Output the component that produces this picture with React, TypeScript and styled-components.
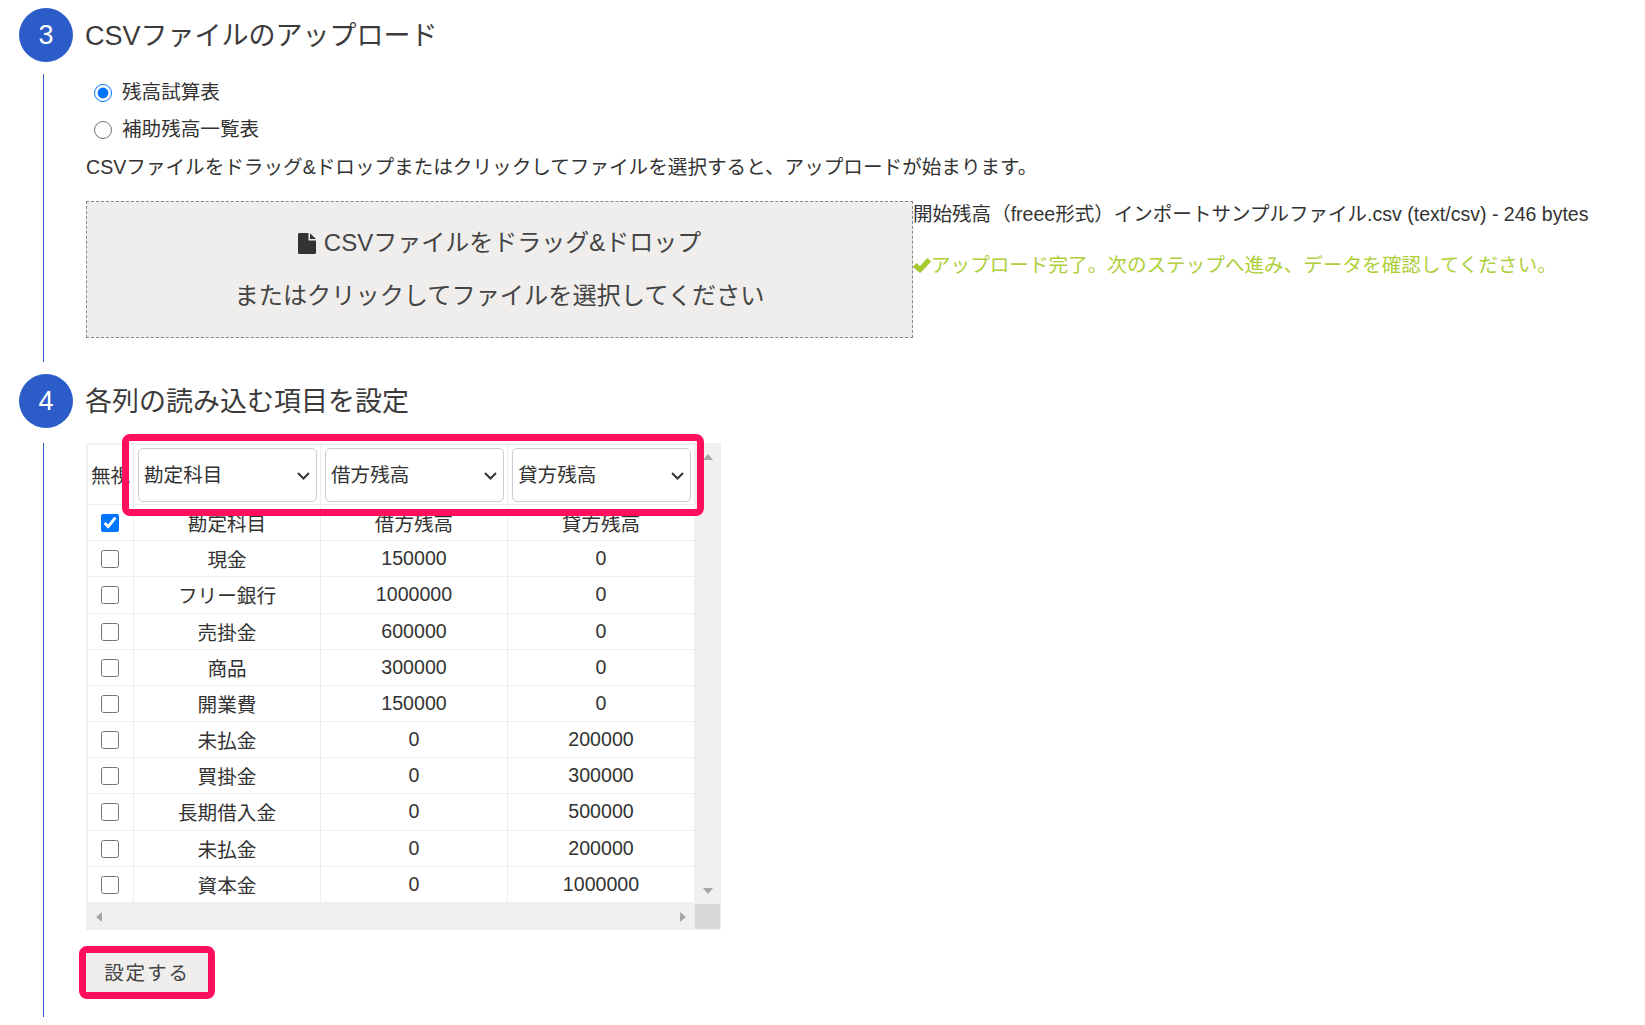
import React from 'react';
import styled, { createGlobalStyle } from 'styled-components';

const GlobalStyle = createGlobalStyle`
  html, body { margin: 0; padding: 0; background: #fff; }
  body {
    font-family: "Liberation Sans", "Noto Sans CJK JP", sans-serif;
    font-size: 19.6px;
    color: #333;
  }
`;

const Page = styled.div`
  padding-top: 8px;
  padding-left: 19px;
  width: 1626px;
`;

const StepHeader = styled.div<{ $gap: number }>`
  display: flex;
  align-items: center;
  gap: 12px;
  margin-bottom: ${(p) => p.$gap}px;
`;

const StepNumber = styled.div`
  flex: none;
  width: 54px;
  height: 54px;
  border-radius: 50%;
  background: #2b5cc8;
  color: #fff;
  font-size: 27px;
  line-height: 54px;
  text-align: center;
`;

const StepTitle = styled.h2`
  margin: 0;
  padding-top: 2px;
  font-size: 27px;
  font-weight: 400;
  line-height: 52px;
  color: #3b3b3b;
`;

const StepBody = styled.div<{ $bottom: number; $after?: number }>`
  margin-left: 24px;
  margin-bottom: ${(p) => p.$after ?? 0}px;
  padding-left: 42px;
  padding-bottom: ${(p) => p.$bottom}px;
  border-left: 1.5px solid #2b5cc8;
`;

const RadioRow = styled.label`
  display: flex;
  align-items: center;
  gap: 10px;
  height: 37px;
  padding-left: 8px;
  line-height: 37px;
`;

const Radio = styled.input`
  flex: none;
  width: 18px;
  height: 18px;
  margin: 0;
`;

const Note = styled.p`
  margin: 0 0 16px;
  padding-top: 1px;
  line-height: 36px;
  white-space: nowrap;
`;

const UploadRow = styled.div`
  display: flex;
  align-items: flex-start;
`;

const DropZone = styled.div`
  flex: none;
  box-sizing: border-box;
  width: 827px;
  height: 137px;
  display: flex;
  flex-direction: column;
  align-items: center;
  justify-content: center;
  gap: 17px;
  background: #efeeec;
  border: 1px dashed #888;
  line-height: 36px;
  color: #444;
`;

const DropLine = styled.div<{ $size: number }>`
  display: flex;
  align-items: center;
  gap: 8px;
  font-size: ${(p) => p.$size}px;
`;

const FileIcon = styled.svg`
  flex: none;
  width: 18px;
  height: 21px;
  fill: #333;
`;

const UploadInfo = styled.div`
  line-height: 24px;
  padding-top: 1px;
`;

const FileName = styled.div`
  font-size: 19.55px;
  white-space: nowrap;
`;

const DoneMessage = styled.div`
  display: flex;
  align-items: center;
  margin-top: 27px;
  color: #aecf3a;
  white-space: nowrap;
`;

const DoneIcon = styled.svg`
  flex: none;
  width: 18px;
  height: 15px;
  fill: #a6cb2f;
`;

const SheetFrame = styled.div`
  position: relative;
  width: 635px;
  height: 487px;
  display: grid;
  grid-template-columns: 608px 27px;
  grid-template-rows: 460px 27px;
  background: #f0f0f0;
`;

const Sheet = styled.div`
  padding: 2px 0 0 2px;
  overflow: hidden;
`;

const Row = styled.div<{ $head?: boolean }>`
  display: grid;
  grid-template-columns: 46px 187px 187px 186px;
  height: ${(p) => (p.$head ? '60px' : '36.18px')};
  background: #fff;
`;

const Cell = styled.div`
  box-sizing: border-box;
  display: flex;
  align-items: center;
  justify-content: center;
  overflow: hidden;
  border-right: 1.2px solid #eee;
  border-bottom: 1.2px solid #eee;
  white-space: nowrap;
  &:last-child { border-right: none; }
`;

const CheckCell = styled(Cell)`
  padding: 1px 2px 0 0;
`;

const HeadLabel = styled(Cell)`
  justify-content: flex-start;
  padding-left: 3px;
`;

const SelectCell = styled(Cell)`
  padding: 3px 0 0 3.5px;
  align-items: flex-start;
  justify-content: flex-start;
`;

const SelectBox = styled.div`
  position: relative;
  flex: none;
  width: 179.5px;
  height: 53.6px;
`;

const ColumnSelect = styled.select`
  appearance: none;
  box-sizing: border-box;
  width: 100%;
  height: 100%;
  padding: 0 24px 0 5.5px;
  border: 1.2px solid #ccc;
  border-radius: 5px;
  background: #fff;
  color: #333;
  font: inherit;
`;

const Chevron = styled.svg`
  position: absolute;
  right: 7px;
  top: 23.5px;
  width: 13px;
  height: 8px;
  fill: none;
  stroke: #333;
  stroke-width: 2;
  pointer-events: none;
`;

const Check = styled.input`
  width: 18px;
  height: 18px;
  margin: 0;
`;

const VerticalTrack = styled.div`
  display: flex;
  flex-direction: column;
  align-items: center;
  justify-content: space-between;
  padding: 11px 0 9px;
`;

const HorizontalTrack = styled.div`
  display: flex;
  align-items: center;
  justify-content: space-between;
  padding: 0 8px 0 10px;
`;

const Corner = styled.div`
  margin: 1px;
  background: #d8d8d8;
`;

const arrowBorders = {
  up: 'border-width: 0 5.5px 6px; border-color: transparent transparent #a6a6a6;',
  down: 'border-width: 6px 5.5px 0; border-color: #a6a6a6 transparent transparent;',
  left: 'border-width: 5.5px 6px 5.5px 0; border-color: transparent #a6a6a6 transparent transparent;',
  right: 'border-width: 5.5px 0 5.5px 6px; border-color: transparent transparent transparent #a6a6a6;',
};

const Arrow = styled.span<{ $dir: keyof typeof arrowBorders }>`
  width: 0;
  height: 0;
  border-style: solid;
  ${(p) => arrowBorders[p.$dir]}
`;

const SelectHighlight = styled.div`
  position: absolute;
  left: 36px;
  top: -9px;
  box-sizing: border-box;
  width: 582px;
  height: 82px;
  border: 7px solid #ff0f5c;
  border-radius: 8px;
  pointer-events: none;
`;

const ButtonHighlight = styled.div`
  width: fit-content;
  margin: 16px 0 0 -7px;
  border: 7px solid #ff0f5c;
  border-radius: 8px;
`;

const SubmitButton = styled.button`
  display: block;
  box-sizing: border-box;
  width: 122px;
  height: 39px;
  padding: 0 0 2px;
  border: none;
  background: #efeeec;
  color: #444;
  font: inherit;
  letter-spacing: 1.8px;
`;

const columns = ['勘定科目', '借方残高', '貸方残高'];

const rows: [string, string, string][] = [
  ['勘定科目', '借方残高', '貸方残高'],
  ['現金', '150000', '0'],
  ['フリー銀行', '1000000', '0'],
  ['売掛金', '600000', '0'],
  ['商品', '300000', '0'],
  ['開業費', '150000', '0'],
  ['未払金', '0', '200000'],
  ['買掛金', '0', '300000'],
  ['長期借入金', '0', '500000'],
  ['未払金', '0', '200000'],
  ['資本金', '0', '1000000'],
];

export default function App() {
  return (
    <Page>
      <GlobalStyle />
      <StepHeader $gap={12}>
        <StepNumber>3</StepNumber>
        <StepTitle>CSVファイルのアップロード</StepTitle>
      </StepHeader>
      <StepBody $bottom={24} $after={12}>
        <RadioRow>
          <Radio type="radio" name="kind" defaultChecked />
          残高試算表
        </RadioRow>
        <RadioRow>
          <Radio type="radio" name="kind" />
          補助残高一覧表
        </RadioRow>
        <Note>CSVファイルをドラッグ&ドロップまたはクリックしてファイルを選択すると、アップロードが始まります。</Note>
        <UploadRow>
          <DropZone>
            <DropLine $size={24}>
              <FileIcon viewBox="0 0 18 21">
                <path d="M1.5 0H10.5V7.5H18V19.5C18 20.4 17.4 21 16.5 21H1.5C.6 21 0 20.4 0 19.5V1.5C0 .6.6 0 1.5 0Z" />
                <path d="M12 0.3 18 6H12Z" />
              </FileIcon>
              CSVファイルをドラッグ&ドロップ
            </DropLine>
            <DropLine $size={24.2}>またはクリックしてファイルを選択してください</DropLine>
          </DropZone>
          <UploadInfo>
            <FileName>開始残高（freee形式）インポートサンプルファイル.csv (text/csv) - 246 bytes</FileName>
            <DoneMessage>
              <DoneIcon viewBox="0 0 18 15">
                <path d="M0.4 8.2 3 5.6C3.4 5.2 3.9 5.2 4.3 5.6L7 8.3 13.7.5C14.1.1 14.6.1 15 .5L17.6 3C18 3.4 18 3.9 17.6 4.3L7.7 14.6C7.3 15 6.8 15 6.4 14.6L.4 9.5C0 9.1 0 8.6.4 8.2Z" />
              </DoneIcon>
              アップロード完了。次のステップへ進み、データを確認してください。
            </DoneMessage>
          </UploadInfo>
        </UploadRow>
      </StepBody>

      <StepHeader $gap={15}>
        <StepNumber>4</StepNumber>
        <StepTitle>各列の読み込む項目を設定</StepTitle>
      </StepHeader>
      <StepBody $bottom={18}>
        <SheetFrame>
          <Sheet>
            <Row $head>
              <HeadLabel>無視</HeadLabel>
              {columns.map((c) => (
                <SelectCell key={c}>
                  <SelectBox>
                    <ColumnSelect defaultValue={c}>
                      {columns.map((o) => (
                        <option key={o}>{o}</option>
                      ))}
                    </ColumnSelect>
                    <Chevron viewBox="0 0 13 8">
                      <path d="M1 1 6.5 6.5 12 1" />
                    </Chevron>
                  </SelectBox>
                </SelectCell>
              ))}
            </Row>
            {rows.map((r, i) => (
              <Row key={i}>
                <CheckCell>
                  <Check type="checkbox" defaultChecked={i === 0} />
                </CheckCell>
                <Cell>{r[0]}</Cell>
                <Cell>{r[1]}</Cell>
                <Cell>{r[2]}</Cell>
              </Row>
            ))}
          </Sheet>
          <VerticalTrack>
            <Arrow $dir="up" />
            <Arrow $dir="down" />
          </VerticalTrack>
          <HorizontalTrack>
            <Arrow $dir="left" />
            <Arrow $dir="right" />
          </HorizontalTrack>
          <Corner />
          <SelectHighlight />
        </SheetFrame>
        <ButtonHighlight>
          <SubmitButton>設定する</SubmitButton>
        </ButtonHighlight>
      </StepBody>
    </Page>
  );
}
